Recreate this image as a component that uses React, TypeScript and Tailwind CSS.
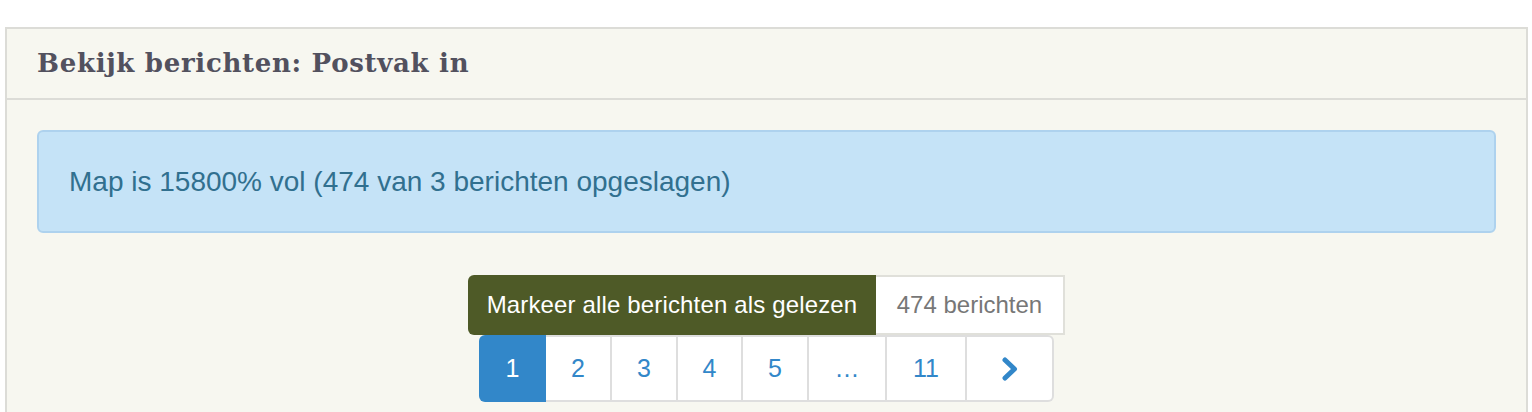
import React from "react";

const pages = [
  { label: "1", w: "w-[67px]", active: true },
  { label: "2", w: "w-[66px]" },
  { label: "3", w: "w-[66px]" },
  { label: "4", w: "w-[65px]" },
  { label: "5", w: "w-[66px]" },
  { label: "…", w: "w-[78px]" },
  { label: "11", w: "w-[80px]" },
];

const ChevronRight = () => (
  <svg width="18" height="24" viewBox="0 0 18 24" fill="none">
    <path
      d="M4 3 L13.5 12 L4 21"
      stroke="#3287c9"
      strokeWidth="5"
      strokeLinecap="round"
      strokeLinejoin="round"
    />
  </svg>
);

const App = () => {
  return (
    <div className="h-[412px] overflow-hidden bg-white pt-[27px] pl-[5px] pr-[4px] font-['Liberation_Sans',Arial,sans-serif]">
      <section className="border-2 border-[#dcdcd7] bg-[#f7f7f0]">
        <div className="flex h-[71px] items-center border-b-2 border-[#dcdcd7] px-[30px]">
          <h2 className="font-['DejaVu_Serif',serif] text-[26px] font-bold tracking-[0.7px] text-[#52515e]">
            Bekijk berichten: Postvak in
          </h2>
        </div>

        <div className="px-[30px] pt-[30px] pb-4">
          <div className="flex h-[103px] items-center rounded-md border-2 border-[#aed2ee] bg-[#c5e3f7] px-[30px]">
            <p className="text-[28px] text-[#31708f]">
              Map is 15800% vol (474 van 3 berichten opgeslagen)
            </p>
          </div>

          <div className="mt-[42px] flex flex-col items-center">
            <div className="flex h-[60px]">
              <button className="flex w-[408px] items-center justify-center rounded-l-md bg-[#4e5a27] text-[24px] tracking-[0.15px] text-white">
                Markeer alle berichten als gelezen
              </button>
              <div className="flex w-[189px] items-center justify-center border-2 border-l-0 border-[#e0e0da] bg-white text-[24px] text-[#777777]">
                474 berichten
              </div>
            </div>

            <nav className="flex h-[67px]">
              {pages.map((p, idx) => (
                <div
                  key={idx}
                  className={
                    p.active
                      ? `${p.w} flex items-center justify-center rounded-l-md bg-[#3287c9] text-[25px] text-white`
                      : `${p.w} flex items-center justify-center border-y-2 border-r-2 border-[#dedede] bg-white text-[25px] text-[#3287c9]`
                  }
                >
                  {p.label}
                </div>
              ))}
              <div className="flex w-[87px] items-center justify-center rounded-r-md border-y-2 border-r-2 border-[#dedede] bg-white">
                <ChevronRight />
              </div>
            </nav>
          </div>
        </div>
      </section>
    </div>
  );
};

export default App;
